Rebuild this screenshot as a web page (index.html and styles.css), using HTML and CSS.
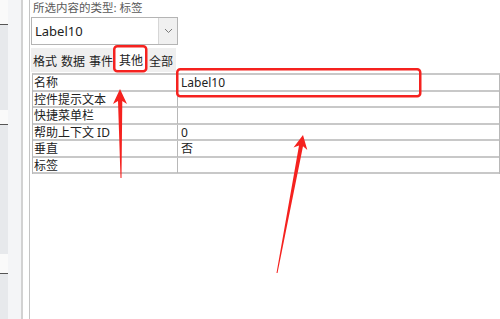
FILE: index.html
```html
<!DOCTYPE html>
<html lang="zh-CN">
<head>
    <meta charset="UTF-8">
    <title>属性表 - 其他</title>
    <link rel="stylesheet" href="styles.css">
</head>
<body>
    <div class="app">
        <div class="nav-strip">
            <div class="strip-blank" style="height: 24px"></div>
            <div class="strip-mark"></div>
            <div class="strip-fill" style="height: 85px"></div>
            <div class="strip-blank" style="height: 14px"></div>
            <div class="strip-mark"></div>
            <div class="strip-fill" style="height: 129px"></div>
            <div class="strip-blank" style="height: 19px"></div>
            <div class="strip-mark"></div>
            <div class="strip-fill strip-rest"></div>
        </div>
        <div class="gutter"></div>
        <div class="divider"></div>

        <div class="sheet">
            <div class="sel-type">所选内容的类型: 标签</div>

            <div class="combo">
                <span class="combo-value">Label10</span>
                <span class="combo-btn">
                    <svg width="9" height="6" viewBox="0 0 9 6"><path d="M1 1 L4.5 4.5 L8 1" fill="none" stroke="#7a7a7a" stroke-width="1"/></svg>
                </span>
            </div>

            <div class="tabs">
                <span class="tab">格式</span>
                <span class="tab">数据</span>
                <span class="tab">事件</span>
                <span class="tab active">其他</span>
                <span class="tab">全部</span>
            </div>

            <div class="props">
                <div class="prop-row"><div class="prop-name">名称</div><div class="prop-value">Label10</div></div>
                <div class="prop-row"><div class="prop-name">控件提示文本</div><div class="prop-value"></div></div>
                <div class="prop-row"><div class="prop-name">快捷菜单栏</div><div class="prop-value"></div></div>
                <div class="prop-row"><div class="prop-name">帮助上下文 ID</div><div class="prop-value">0</div></div>
                <div class="prop-row"><div class="prop-name">垂直</div><div class="prop-value">否</div></div>
                <div class="prop-row"><div class="prop-name">标签</div><div class="prop-value"></div></div>
            </div>
        </div>
    </div>

    <!-- red annotations drawn over the screenshot -->
    <svg class="annotations" width="500" height="319" viewBox="0 0 500 319">
        <rect x="114.25" y="46.25" width="32" height="25" rx="3" fill="none" stroke="#f5221f" stroke-width="2.5"/>
        <rect x="177.25" y="69.25" width="243" height="27" rx="3" fill="none" stroke="#f5221f" stroke-width="2.5"/>
        <polygon points="120,89 127,104 122.3,101 121.5,178 120.5,178 118,101 113,104" fill="#f5221f"/>
        <polygon points="303,135 307.3,150.1 303,146.2 277.5,273 276.5,273 299,145.4 293.5,147.5" fill="#f5221f"/>
    </svg>
</body>
</html>
```

FILE: styles.css
```css
body {
    margin: 0;
    background: white;
    font-family: "Noto Sans", "Noto Sans CJK SC", sans-serif;
    color: #222;
    overflow: hidden;
}
.app {
    display: flex;
    height: 319px;
}
.nav-strip {
    width: 8px;
    display: flex;
    flex-direction: column;
}
.strip-blank {
    background: #fafafa;
}
.strip-fill {
    background: #e7e9ec;
}
.strip-rest {
    flex: 1;
}
.strip-mark {
    height: 1px;
    background: #555;
}
.gutter {
    width: 13px;
    background: #f4f5f7;
}
.divider {
    width: 6px;
    background: white;
    border-left: 2px solid #d2d2d2;
    border-right: 1px solid #c4c4c4;
}
.sheet {
    flex: 1;
    padding-left: 1px;
}
.sel-type {
    height: 15px;
    line-height: 15px;
    font-size: 11.5px;
    color: #5a5a5a;
    padding-left: 2px;
}
.combo {
    margin-top: 2px;
    width: 147px;
    height: 28px;
    box-sizing: border-box;
    border: 1px solid #b4b4b4;
    display: flex;
    background: white;
}
.combo-value {
    flex: 1;
    font-size: 13px;
    line-height: 26px;
    padding-left: 3px;
}
.combo-btn {
    width: 18px;
    background: #f0f0f0;
    border-left: 1px solid #d6d6d6;
    display: flex;
    align-items: center;
    justify-content: center;
}
.tabs {
    margin-top: 3px;
    width: 145px;
    height: 24px;
    background: #efefef;
    display: flex;
}
.tab {
    font-size: 12px;
    line-height: 24px;
    padding: 2px 2px 0;
    color: #222;
}
.tab.active {
    background: white;
    padding: 2px 4px 0;
    margin-top: -2px;
    line-height: 26px;
}
.props {
    margin-top: 1px;
    margin-left: 1px;
    width: 466px;
    border-top: 2px solid #c8c8c8;
    border-left: 1px solid #b8b8b8;
    border-right: 1px solid #b8b8b8;
}
.prop-row {
    display: grid;
    grid-template-columns: 145px 1fr;
    height: 16.5px;
    box-sizing: border-box;
    border-bottom: 2px solid #c8c8c8;
}
.prop-name,
.prop-value {
    font-size: 12px;
    line-height: 14.5px;
    padding-top: 1px;
    padding-left: 1px;
    white-space: nowrap;
}
.prop-name {
    border-right: 1px solid #b8b8b8;
}
.prop-value {
    padding-left: 3px;
}
.annotations {
    position: absolute;
    left: 0;
    top: 0;
    pointer-events: none;
}
```
